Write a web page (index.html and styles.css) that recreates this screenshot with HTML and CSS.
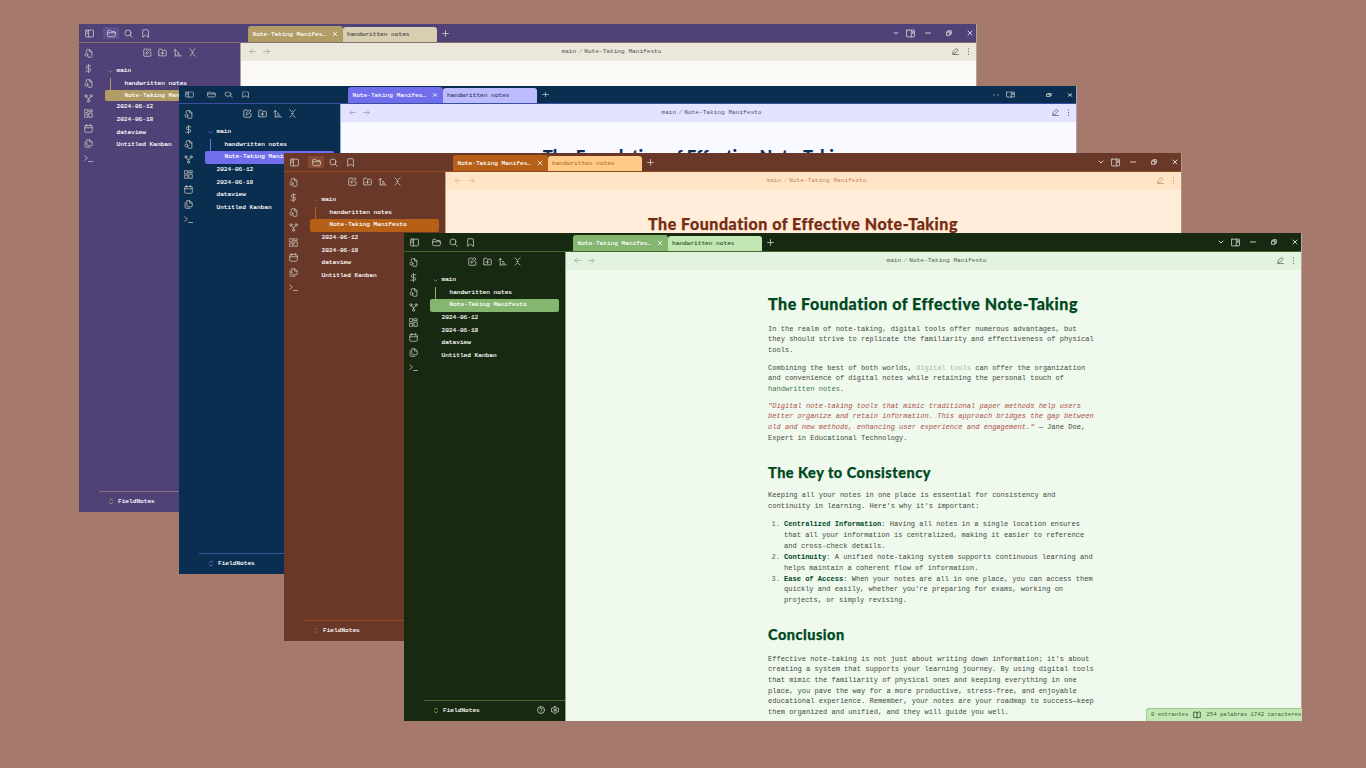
FILE: index.html
```html
<!DOCTYPE html>
<html lang="en">
<head>
<meta charset="utf-8">
<title>FieldNotes themes</title>
<link rel="stylesheet" href="styles.css">
</head>
<body>
<svg class="defs" aria-hidden="true">
  <symbol id="panel" viewBox="0 0 24 24"><rect x="1.5" y="3" width="21" height="18" rx="2"/><path d="M9.500 3v18M4.500 7.500h2M4.500 11.500h2"/></symbol>
  <symbol id="panel-r" viewBox="0 0 24 24"><rect x="1.500" y="3" width="21" height="18" rx="1"/><path d="M14 3v18"/><path d="M18.500 7v5" stroke-width="3"/></symbol>
  <symbol id="folder" viewBox="0 0 24 24"><path d="M2 10V5a1.500 1.500 0 0 1 1.500-1.500H9l2.500 3H20A1.500 1.500 0 0 1 21.500 8v2M2 10h21l-1.500 9.500a1.500 1.500 0 0 1-1.500 1H4a1.500 1.500 0 0 1-1.500-1z"/></symbol>
  <symbol id="search" viewBox="0 0 24 24"><circle cx="10.500" cy="10.500" r="8"/><path d="m22 22-5.500-5.500"/></symbol>
  <symbol id="mark" viewBox="0 0 24 24"><path d="M19.500 22 12 16.500 4.500 22V4a2 2 0 0 1 2-2h11a2 2 0 0 1 2 2z"/></symbol>
  <symbol id="filefind" viewBox="0 0 24 24"><path d="M6 8V3.500A1.500 1.500 0 0 1 7.500 2H16l5 5v13.500a1.500 1.500 0 0 1-1.500 1.500H13M15 2v6h6"/><circle cx="6.500" cy="15" r="4"/><path d="m9.500 18 3 4"/></symbol>
  <symbol id="dollar" viewBox="0 0 24 24"><path d="M12 1v22M18 5H9.500a3.500 3.500 0 0 0 0 7h5a3.500 3.500 0 0 1 0 7H5"/></symbol>
  <symbol id="fork" viewBox="0 0 24 24"><circle cx="12" cy="19" r="3"/><circle cx="5" cy="5" r="3"/><circle cx="19" cy="5" r="3"/><path d="m6.500 7.500 4 5M17.500 7.500l-4 5M12 12v4"/></symbol>
  <symbol id="dash" viewBox="0 0 24 24"><rect x="2" y="2" width="8" height="8"/><rect x="14" y="2" width="8" height="5"/><rect x="14" y="11" width="8" height="11"/><rect x="2" y="14" width="8" height="8"/></symbol>
  <symbol id="cal" viewBox="0 0 24 24"><rect x="2" y="4" width="20" height="18" rx="2"/><path d="M7 1v5M17 1v5M2 10h20"/></symbol>
  <symbol id="files" viewBox="0 0 24 24"><path d="M8 2h8l6 6v8a2 2 0 0 1-2 2H10a2 2 0 0 1-2-2zM15 2v6h6M3 7v13a2 2 0 0 0 2 2h11"/></symbol>
  <symbol id="term" viewBox="0 0 24 24"><path d="m2 5 7 6-7 6M12 20h11"/></symbol>
  <symbol id="edit" viewBox="0 0 24 24"><path d="M12 3H4a2 2 0 0 0-2 2v15a2 2 0 0 0 2 2h15a2 2 0 0 0 2-2v-8M18.500 2.500l3 3L12 15l-4 1 1-4z"/></symbol>
  <symbol id="newfolder" viewBox="0 0 24 24"><path d="M2 19V5a2 2 0 0 1 2-2h5l2.500 3H20a2 2 0 0 1 2 2v11a2 2 0 0 1-2 2H4a2 2 0 0 1-2-2zM12 10v7M8.500 13.500h7"/></symbol>
  <symbol id="sort" viewBox="0 0 24 24"><path d="m2 8 4-4 4 4M6 4v17M12 12h3M12 16.500h6M6 21h16"/></symbol>
  <symbol id="fold" viewBox="0 0 24 24"><path d="m5 2 7 7 7-7M5 22l7-7 7 7M10 12h4"/></symbol>
  <symbol id="down" viewBox="0 0 24 24"><path d="m4 8 8 8 8-8"/></symbol>
  <symbol id="updown" viewBox="0 0 24 24"><path d="m5 8 7-6 7 6M5 16l7 6 7-6"/></symbol>
  <symbol id="x" viewBox="0 0 24 24"><path d="M4 4l16 16M20 4 4 20"/></symbol>
  <symbol id="plus" viewBox="0 0 24 24"><path d="M12 2v20M2 12h20"/></symbol>
  <symbol id="min" viewBox="0 0 24 24"><path d="M2 12h20"/></symbol>
  <symbol id="restore" viewBox="0 0 24 24"><path d="M3 8h13v13H3zM8 8V3h13v13h-5"/></symbol>
  <symbol id="left" viewBox="0 0 24 24"><path d="M22 12H3M11 4l-8 8 8 8"/></symbol>
  <symbol id="right" viewBox="0 0 24 24"><path d="M2 12h19M13 4l8 8-8 8"/></symbol>
  <symbol id="pen" viewBox="0 0 24 24"><path d="M16 2.500l5 5L9 19H3v-5zM2 22.500h20"/></symbol>
  <symbol id="dots" viewBox="0 0 24 24"><path d="M12 3v1M12 12v1M12 21v1"/></symbol>
  <symbol id="twodots" viewBox="0 0 24 24"><path d="M3 12h2M18 12h2"/></symbol>
  <symbol id="help" viewBox="0 0 24 24"><circle cx="12" cy="12" r="10.500"/><path d="M8.500 9a3.500 3.500 0 1 1 5 3c-1 .6-1.500 1-1.500 2M12 17.500v.5"/></symbol>
  <symbol id="gear" viewBox="0 0 24 24"><path d="M10 1.500h4l1 3.500 3 1.500 3.500-.5 2 3.500L21 12l2.500 2.500-2 3.500-3.500-.5-3 1.500-1 3.500h-4L9 19l-3-1.500-3.500.5-2-3.500L3 12 .5 9.500l2-3.500 3.500.5L9 5z"/><circle cx="12" cy="12" r="3.500"/></symbol>
  <symbol id="book" viewBox="0 0 24 24"><path d="M12 5v16M12 5C10 3 7 3 2 3v16c5 0 8 0 10 2 2-2 5-2 10-2V3c-5 0-8 0-10 2z"/></symbol>
</svg>

<section class="win purple">
  <div class="bar">
    <div class="tools"><svg><use href="#panel"/></svg><span class="hl"><svg><use href="#folder"/></svg></span><svg><use href="#search"/></svg><svg><use href="#mark"/></svg></div>
    <div class="tabs"><span class="tab on">Note-Taking Manifes…<svg><use href="#x"/></svg></span><span class="tab">handwritten notes</span><svg class="plus"><use href="#plus"/></svg></div>
    <div class="ctl"><svg><use href="#down"/></svg><svg class="big"><use href="#panel-r"/></svg><svg><use href="#min"/></svg><svg><use href="#restore"/></svg><svg><use href="#x"/></svg></div>
  </div>
  <aside class="side">
    <div class="ribbon"><svg><use href="#filefind"/></svg><svg><use href="#dollar"/></svg><svg><use href="#filefind"/></svg><svg><use href="#fork"/></svg><svg><use href="#dash"/></svg><svg><use href="#cal"/></svg><svg><use href="#files"/></svg><svg><use href="#term"/></svg></div>
    <div class="panel">
      <div class="acts"><svg><use href="#edit"/></svg><svg><use href="#newfolder"/></svg><svg><use href="#sort"/></svg><svg><use href="#fold"/></svg></div>
      <ul class="tree"><li class="root"><svg><use href="#down"/></svg>main</li><li class="kid">handwritten notes</li><li class="kid sel"><span>Note-Taking Manifesto</span></li><li>2024-06-12</li><li>2024-06-18</li><li>dataview</li><li>Untitled Kanban</li></ul>
      <div class="vault"><svg><use href="#updown"/></svg><span>FieldNotes</span></div>
    </div>
  </aside>
  <main class="note">
    <header><svg><use href="#left"/></svg><svg><use href="#right"/></svg><p>main <i>/</i> Note-Taking Manifesto</p><svg class="pen"><use href="#pen"/></svg><svg><use href="#dots"/></svg></header>
  </main>
</section>

<section class="win blue">
  <div class="bar">
    <div class="tools"><svg><use href="#panel"/></svg><span class="hl"><svg><use href="#folder"/></svg></span><svg><use href="#search"/></svg><svg><use href="#mark"/></svg></div>
    <div class="tabs"><span class="tab on"><b>Note-Taking Manifes…</b><svg><use href="#x"/></svg></span><span class="tab"><b>handwritten notes</b></span><svg class="plus"><use href="#plus"/></svg></div>
    <div class="ctl"><svg><use href="#twodots"/></svg><svg class="big"><use href="#panel-r"/></svg><svg></svg><svg><use href="#restore"/></svg><svg><use href="#x"/></svg></div>
  </div>
  <aside class="side">
    <div class="ribbon"><svg><use href="#filefind"/></svg><svg><use href="#dollar"/></svg><svg><use href="#filefind"/></svg><svg><use href="#fork"/></svg><svg><use href="#dash"/></svg><svg><use href="#cal"/></svg><svg><use href="#files"/></svg><svg><use href="#term"/></svg></div>
    <div class="panel">
      <div class="acts"><svg><use href="#edit"/></svg><svg><use href="#newfolder"/></svg><svg><use href="#sort"/></svg><svg><use href="#fold"/></svg></div>
      <ul class="tree"><li class="root"><svg><use href="#down"/></svg>main</li><li class="kid">handwritten notes</li><li class="kid sel"><span>Note-Taking Manifesto</span></li><li>2024-06-12</li><li>2024-06-18</li><li>dataview</li><li>Untitled Kanban</li></ul>
      <div class="vault"><svg><use href="#updown"/></svg><span>FieldNotes</span></div>
    </div>
  </aside>
  <main class="note">
    <header><svg><use href="#left"/></svg><svg><use href="#right"/></svg><p>main <i>/</i> Note-Taking Manifesto</p><svg class="pen"><use href="#pen"/></svg><svg><use href="#dots"/></svg></header>
    <article><h1>The Foundation of Effective Note-Taking</h1></article>
  </main>
</section>

<section class="win brown">
  <div class="bar">
    <div class="tools"><svg><use href="#panel"/></svg><span class="hl"><svg><use href="#folder"/></svg></span><svg><use href="#search"/></svg><svg><use href="#mark"/></svg></div>
    <div class="tabs"><span class="tab on">Note-Taking Manifes…<svg><use href="#x"/></svg></span><span class="tab">handwritten notes</span><svg class="plus"><use href="#plus"/></svg></div>
    <div class="ctl"><svg><use href="#down"/></svg><svg class="big"><use href="#panel-r"/></svg><svg><use href="#min"/></svg><svg><use href="#restore"/></svg><svg><use href="#x"/></svg></div>
  </div>
  <aside class="side">
    <div class="ribbon"><svg><use href="#filefind"/></svg><svg><use href="#dollar"/></svg><svg><use href="#filefind"/></svg><svg><use href="#fork"/></svg><svg><use href="#dash"/></svg><svg><use href="#cal"/></svg><svg><use href="#files"/></svg><svg><use href="#term"/></svg></div>
    <div class="panel">
      <div class="acts"><svg><use href="#edit"/></svg><svg><use href="#newfolder"/></svg><svg><use href="#sort"/></svg><svg><use href="#fold"/></svg></div>
      <ul class="tree"><li class="root"><svg><use href="#down"/></svg>main</li><li class="kid">handwritten notes</li><li class="kid sel"><span>Note-Taking Manifesto</span></li><li>2024-06-12</li><li>2024-06-18</li><li>dataview</li><li>Untitled Kanban</li></ul>
      <div class="vault"><svg><use href="#updown"/></svg><span>FieldNotes</span></div>
    </div>
  </aside>
  <main class="note">
    <header><svg><use href="#left"/></svg><svg><use href="#right"/></svg><p>main <i>/</i> Note-Taking Manifesto</p><svg class="pen"><use href="#pen"/></svg><svg><use href="#dots"/></svg></header>
    <article><h1>The Foundation of Effective Note-Taking</h1></article>
  </main>
</section>

<section class="win green">
  <div class="bar">
    <div class="tools"><svg><use href="#panel"/></svg><span class="hl"><svg><use href="#folder"/></svg></span><svg><use href="#search"/></svg><svg><use href="#mark"/></svg></div>
    <div class="tabs"><span class="tab on">Note-Taking Manifes…<svg><use href="#x"/></svg></span><span class="tab">handwritten notes</span><svg class="plus"><use href="#plus"/></svg></div>
    <div class="ctl"><svg><use href="#down"/></svg><svg class="big"><use href="#panel-r"/></svg><svg><use href="#min"/></svg><svg><use href="#restore"/></svg><svg><use href="#x"/></svg></div>
  </div>
  <aside class="side">
    <div class="ribbon"><svg><use href="#filefind"/></svg><svg><use href="#dollar"/></svg><svg><use href="#filefind"/></svg><svg><use href="#fork"/></svg><svg><use href="#dash"/></svg><svg><use href="#cal"/></svg><svg><use href="#files"/></svg><svg><use href="#term"/></svg></div>
    <div class="panel">
      <div class="acts"><svg><use href="#edit"/></svg><svg><use href="#newfolder"/></svg><svg><use href="#sort"/></svg><svg><use href="#fold"/></svg></div>
      <ul class="tree"><li class="root"><svg><use href="#down"/></svg>main</li><li class="kid">handwritten notes</li><li class="kid sel"><span>Note-Taking Manifesto</span></li><li>2024-06-12</li><li>2024-06-18</li><li>dataview</li><li>Untitled Kanban</li></ul>
      <div class="vault"><svg><use href="#updown"/></svg><span>FieldNotes</span><svg class="util"><use href="#help"/></svg><svg class="util"><use href="#gear"/></svg></div>
    </div>
  </aside>
  <main class="note">
    <header><svg><use href="#left"/></svg><svg><use href="#right"/></svg><p>main <i>/</i> Note-Taking Manifesto</p><svg class="pen"><use href="#pen"/></svg><svg><use href="#dots"/></svg></header>
    <article>
      <h1>The Foundation of Effective Note-Taking</h1>
      <p>In the realm of note-taking, digital tools offer numerous advantages, but<br>they should strive to replicate the familiarity and effectiveness of physical<br>tools.</p>
      <p>Combining the best of both worlds, <a class="faint">digital tools</a> can offer the organization<br>and convenience of digital notes while retaining the personal touch of<br><a class="link">handwritten notes</a>.</p>
      <p class="quote"><em>"Digital note-taking tools that mimic traditional paper methods help users<br>better organize and retain information. This approach bridges the gap between<br>old and new methods, enhancing user experience and engagement."</em> — Jane Doe,<br>Expert in Educational Technology.</p>
      <h2 class="key">The Key to Consistency</h2>
      <p>Keeping all your notes in one place is essential for consistency and<br>continuity in learning. Here's why it's important:</p>
      <ol>
        <li><strong>Centralized Information</strong>: Having all notes in a single location ensures<br>that all your information is centralized, making it easier to reference<br>and cross-check details.</li>
        <li><strong>Continuity</strong>: A unified note-taking system supports continuous learning and<br>helps maintain a coherent flow of information.</li>
        <li><strong>Ease of Access</strong>: When your notes are all in one place, you can access them<br>quickly and easily, whether you're preparing for exams, working on<br>projects, or simply revising.</li>
      </ol>
      <h2 class="end">Conclusion</h2>
      <p>Effective note-taking is not just about writing down information; it's about<br>creating a system that supports your learning journey. By using digital tools<br>that mimic the familiarity of physical ones and keeping everything in one<br>place, you pave the way for a more productive, stress-free, and enjoyable<br>educational experience. Remember, your notes are your roadmap to success—keep<br>them organized and unified, and they will guide you well.</p>
    </article>
    <div class="status"><span>0 entrantes</span><svg><use href="#book"/></svg><span>254 palabras 1742 caracteres</span></div>
  </main>
</section>
</body>
</html>
```

FILE: styles.css
```css
* { box-sizing: border-box; margin: 0; padding: 0; }
body {
  width: 1366px; height: 768px; overflow: hidden; position: relative;
  background: #a5796c;
  font-family: "Liberation Mono", monospace; font-size: 6.13px; line-height: 9px;
}
.defs { position: absolute; width: 0; height: 0; }
svg { width: 9px; height: 9px; flex: none; display: block; fill: none; stroke: currentColor; stroke-width: 2; stroke-linecap: round; stroke-linejoin: round; }

.win {
  position: absolute; width: 897px; height: 488px; background: var(--dark); color: #fff;
  display: grid; grid-template: 19px 1fr / 162px 1fr;
  box-shadow: 1px 0 0 var(--edge);
}
.purple { left: 79px; top: 24px; --dark: #504176; --hl: #5f5091; --tab: #b09c64; --tab2: #d8cfb2; --tabink: #4c4846; --head: #ebe7db; --page: #faf9f5; --line: #85736f; --ink: #545057; --h: #504176; --edge: #b4a69f; --div: #a99d98; }
.blue { left: 179px; top: 86px; --dark: #0a2e50; --hl: transparent; --tab: #716eec; --tab2: #bdbcff; --tabink: #333c66; --head: #e3e2ff; --page: #f9faff; --line: #3d4da0; --ink: #4c5368; --h: #0a2e5c; --edge: #aaa1b4; --div: #a3a8c8; }
.brown { left: 284px; top: 153px; --dark: #693828; --hl: #874831; --tab: #b55f17; --tab2: #ffcb87; --tabink: #b87441; --head: #ffe5c5; --page: #ffedda; --line: #914b20; --ink: #c08563; --h: #762c12; --edge: #b39380; --div: #c29c84; }
.green { left: 404px; top: 233px; --dark: #172910; --hl: transparent; --tab: #84b670; --tab2: #c2e7b4; --tabink: #33502f; --head: #e3f3df; --page: #f0f9ed; --line: #42672f; --ink: #505c4e; --h: #00491f; --edge: #b5a89a; --div: #90a58a; }
.blue { grid-template-rows: 18px 1fr; }

/* title bar */
.bar { grid-column: 1 / 3; display: flex; border-bottom: 1px solid var(--line); }
.tools { width: 169px; display: flex; align-items: center; padding-left: 5.500px; color: #d5d3d0; }
.tools > svg { margin-right: 8.500px; }
.tools > svg:first-child { margin-right: 9.500px; }
.hl { width: 16px; height: 12px; margin-right: 4.500px; display: grid; place-items: center; border-radius: 2px; background: var(--hl); }
.tabs { display: flex; align-items: flex-end; }
.tab { display: flex; align-items: center; width: 94px; height: 15px; padding: 0 4px 0 4px; border-radius: 3px 3px 0 0; background: var(--tab2); color: var(--tabink); white-space: nowrap; -webkit-text-stroke: .1px currentColor; }
.tab.on { width: 95px; height: 16px; padding: 0 5px 0 4.500px; background: var(--tab); color: #fff; }
.tab svg { width: 6px; height: 6px; margin-left: auto; stroke-width: 3; }
.tab b { font-weight: inherit; }
.plus { width: 7px; height: 7px; margin: 0 0 5px 5px; stroke-width: 2.500; color: #ddd; }
.ctl { flex: 1; display: flex; align-items: center; justify-content: flex-end; padding-right: 3px; color: #e4e4e0; }
.ctl svg { width: 6px; height: 6px; margin-left: 15px; stroke-width: 3.500; }
.ctl .big { width: 9px; height: 9px; margin-left: 7px; stroke-width: 2; }
.ctl .big + svg { margin-left: 10.500px; }
.blue .bar svg, .blue .tab b { transform: scaleY(.75); }

/* sidebar */
.side { display: flex; min-height: 0; border-right: 1px solid var(--div); }
.ribbon { width: 20px; display: flex; flex-direction: column; gap: 6px; padding: 5.500px 0 0 5px; color: #c9c8c2; }
.panel { flex: 1; display: flex; flex-direction: column; }
.acts { display: flex; gap: 6px; padding: 5px 0 0 43.500px; color: #d5d4cf; }
.tree { list-style: none; margin: 8px 6px 0 6px; -webkit-text-stroke: .12px #fff; }
.tree li { height: 12.700px; line-height: 12.700px; padding-left: 11.500px; white-space: nowrap; }
.tree .root { display: flex; align-items: center; padding-left: 3px; }
.root svg { width: 5px; height: 5px; margin-right: 3.500px; stroke-width: 3.500; color: var(--tab); }
.tree .kid { padding-left: 13.500px; margin-left: 5px; border-left: 1px solid var(--tab); }
.tree .sel { margin-left: 0; padding-left: 19.500px; border: 0; border-radius: 2px; background: var(--tab); }
.purple .sel { height: 11px; line-height: 11px; }
.purple .sel span { display: block; transform: scaleY(.75); }
.vault { height: 21px; margin-top: auto; padding-bottom: 1px; border-top: 1px solid var(--line); display: flex; align-items: center; padding: 0 6px 1.500px 9px; }
.vault svg { width: 6px; height: 7px; stroke-width: 3; color: var(--tab); }
.vault span { margin: 0 auto 0 4px; -webkit-text-stroke: .12px #fff; }
.vault .util { width: 8px; height: 8px; margin-left: 6px; stroke-width: 2.300; color: #d5d4cf; }

/* note */
.note { background: var(--page); color: #3f4a41; display: flex; flex-direction: column; min-height: 0; position: relative; }
.note header { height: 18px; flex: none; background: var(--head); color: var(--ink); display: flex; align-items: center; padding: 0 4px 2px 8px; }
.note header svg { width: 7px; height: 7px; stroke-width: 2.500; margin-right: 7px; }
.note header svg:not(.pen):not(:last-child) { opacity: .5; }
.note header .pen { margin-right: 6px; }
.note header svg:last-child { margin: 0; stroke-width: 3; }
.note header p { flex: 1; text-align: center; white-space: pre; padding-right: 6px; }
.note header i { opacity: .7; margin: 0 -1.500px; }
article { flex: none; width: 340px; margin-left: 202px; font-size: 7.050px; line-height: 10.600px; white-space: nowrap; }
h1, h2 { font-family: Lato, sans-serif; font-weight: 900; color: var(--h); -webkit-text-stroke: .25px currentColor; }
h1 { font-size: 16px; line-height: 20px; letter-spacing: .53px; margin-top: 23.500px; margin-bottom: 10px; }
h2 { font-size: 14.500px; line-height: 18px; letter-spacing: .5px; }
article p + p { margin-top: 7.500px; }
article p + .quote { margin-top: 6.200px; }
.key { margin: 20.500px 0 8.500px; }
.end { margin: 20px 0 9.500px; }
.faint { color: #a0bca5; }
.link { color: #3f7650; }
em { color: #b0504e; }
strong { color: #00491f; }
ol { margin: 7.700px 0 0 16px; line-height: 10.900px; list-style: none; counter-reset: n; }
ol li { counter-increment: n; }
ol li::before { content: counter(n) "."; display: inline-block; width: 12.500px; margin-left: -12.500px; color: #4a7056; }
.status { position: absolute; right: -1px; bottom: 0; width: 156px; height: 13px; overflow: hidden; display: flex; align-items: center; gap: 5px; padding: 0 0 1px 4px; white-space: nowrap; background: var(--tab2); border: 1px solid #9bce88; border-width: 1px 0 0 1px; border-radius: 3px 0 0 0; font-size: 5.670px; color: #3e5a39; }
.status svg { width: 8px; height: 8px; color: #172910; }
```
